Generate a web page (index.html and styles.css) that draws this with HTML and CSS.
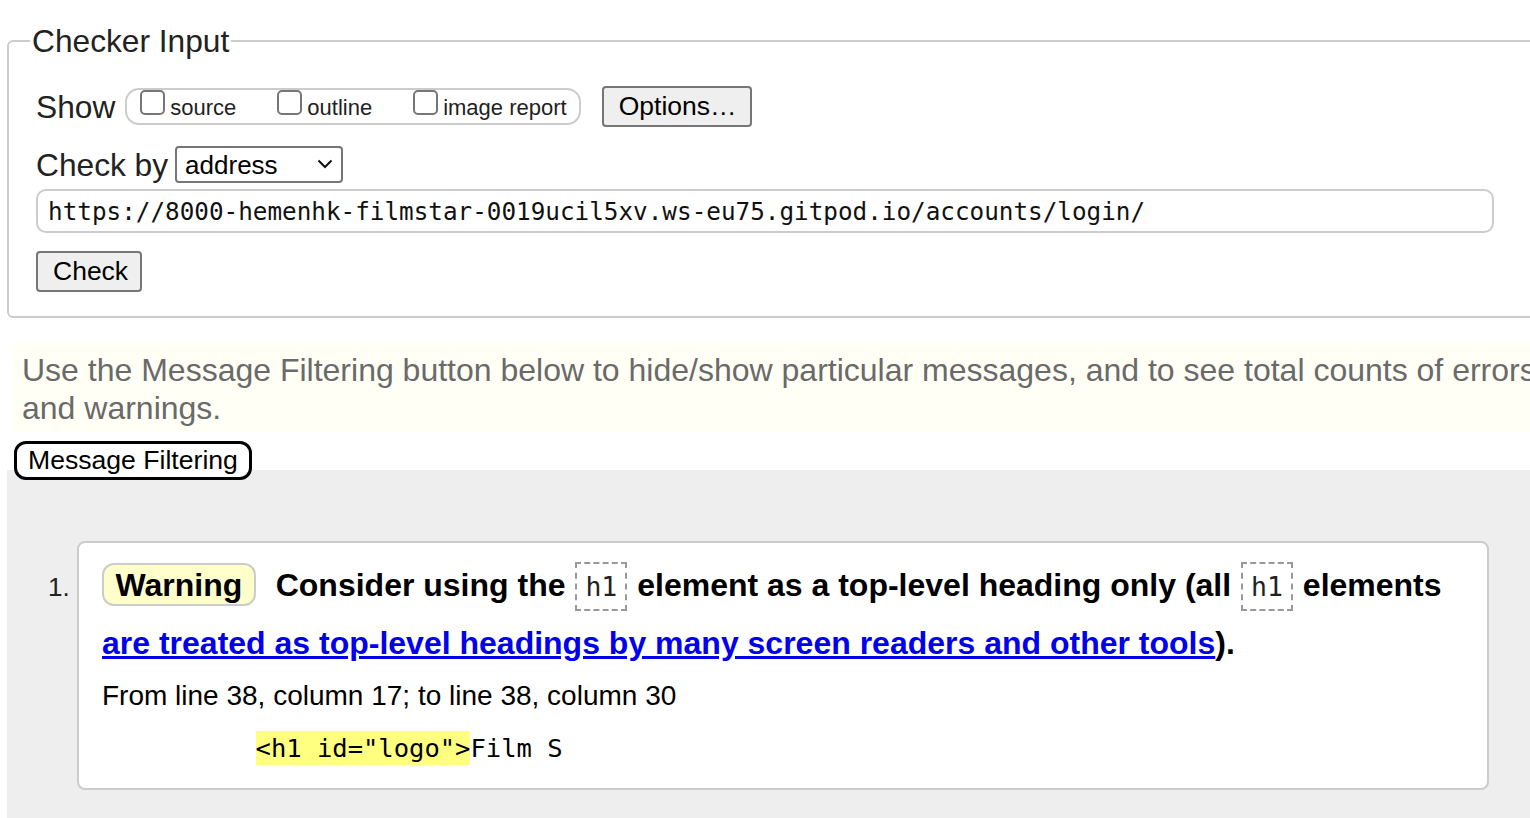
FILE: index.html
```html
<!DOCTYPE html>
<html lang="en">
<head>
<meta charset="utf-8">
<title>Nu Html Checker</title>
<link rel="stylesheet" href="styles.css">
</head>
<body>
<div class="page">
  <fieldset class="checker">
    <legend class="checker-legend">Checker Input</legend>
    <div class="row show-row">
      <span class="row-label">Show</span>
      <div class="show-group">
        <label class="opt"><input type="checkbox"><span>source</span></label>
        <label class="opt"><input type="checkbox"><span>outline</span></label>
        <label class="opt"><input type="checkbox"><span>image report</span></label>
      </div>
      <button class="btn options-btn" type="button">Options…</button>
    </div>
    <div class="row by-row">
      <span class="row-label">Check by</span>
      <span class="select-wrap">
        <select class="by-select"><option>address</option></select>
        <svg class="chev" width="16" height="10" viewBox="0 0 16 10"><path d="M1.5 1.5 L8 8 L14.5 1.5" fill="none" stroke="#111" stroke-width="2"/></svg>
      </span>
    </div>
    <input class="url" type="text" value="https://8000-hemenhk-filmstar-0019ucil5xv.ws-eu75.gitpod.io/accounts/login/">
    <div class="row check-row">
      <button class="btn check-btn" type="submit">Check</button>
    </div>
  </fieldset>

  <p class="filter-note">Use the Message Filtering button below to hide/show particular messages, and to see total counts of errors and warnings.</p>

  <div class="filter-row">
    <button class="filter-btn" type="button">Message Filtering</button>
  </div>

  <div class="results">
    <ol class="messages">
      <li class="msg">
        <p class="msg-text"><span class="badge">Warning</span> Consider using the <code class="tag">h1</code> element as a top-level heading only (all <code class="tag">h1</code> elements <a class="msg-link" href="#">are treated as top-level headings by many screen readers and other tools</a>).</p>
        <p class="location">From line 38, column 17; to line 38, column 30</p>
        <p class="extract"><code class="extract-code">          <mark class="hl">&lt;h1 id="logo"&gt;</mark>Film S</code></p>
      </li>
    </ol>
  </div>
</div>
</body>
</html>
```

FILE: styles.css
```css
html {
  overflow: hidden;
}

body {
  margin: 0;
  font-family: "Liberation Sans", Arial, sans-serif;
  color: #222;
  background: #fff;
}

.page {
  width: 1563px;
  margin-left: 7px;
}

/* ---------- Checker input fieldset ---------- */
.checker {
  margin: 23px 0 0;
  padding: 27px 0 24px 27px;
  border: 2px solid #ccc;
  border-radius: 6px;
  min-width: 0;
}

.checker-legend {
  font-size: 31.7px;
  line-height: 36px;
  padding: 0 2px;
  margin-left: -6px;
  color: #222;
}

.row {
  display: flex;
  align-items: center;
}

.row-label {
  font-size: 31.7px;
  line-height: 36px;
  color: #222;
}

.show-group {
  display: flex;
  align-items: flex-start;
  gap: 41px;
  height: 37px;
  box-sizing: border-box;
  border: 2px solid #ccc;
  border-radius: 14px;
  padding: 0 12px 0 13px;
  margin-left: 10px;
}

.opt {
  display: flex;
  align-items: flex-start;
  gap: 5px;
  font-size: 22px;
  color: #222;
}

.opt input {
  appearance: none;
  -webkit-appearance: none;
  box-sizing: border-box;
  width: 25px;
  height: 25px;
  margin: 0;
  border: 2px solid #767676;
  border-radius: 5px;
  background: #fff;
}

.opt span {
  line-height: 25px;
  padding-top: 5px;
}

.btn {
  box-sizing: border-box;
  height: 41px;
  background: #efefef;
  border: 2px solid #767676;
  border-radius: 4px;
  font-family: "Liberation Sans", Arial, sans-serif;
  font-size: 26.5px;
  color: #000;
  padding: 0 15px;
}

.options-btn {
  margin-left: 21px;
  width: 150px;
}

.by-row {
  margin-top: 19px;
}

.select-wrap {
  position: relative;
  display: inline-flex;
  margin-left: 7px;
}

.by-select {
  appearance: none;
  -webkit-appearance: none;
  box-sizing: border-box;
  width: 168px;
  height: 37px;
  padding: 0 30px 0 8px;
  font-family: "Liberation Sans", Arial, sans-serif;
  font-size: 26px;
  color: #000;
  background: #fff;
  border: 2px solid #767676;
  border-radius: 4px;
}

.chev {
  position: absolute;
  right: 10px;
  top: 13px;
  pointer-events: none;
}

.url {
  display: block;
  box-sizing: border-box;
  width: 1458px;
  height: 44px;
  margin-top: 6px;
  padding: 0 10px;
  border: 2px solid #ccc;
  border-radius: 10px;
  font-family: "DejaVu Sans Mono", "Liberation Mono", monospace;
  font-size: 24.3px;
  color: #111;
  background: #fff;
}

.check-row {
  margin-top: 18px;
}

.check-btn {
  width: 106px;
}

/* ---------- Filter note ---------- */
.filter-note {
  margin: 24px 0 0 7px;
  padding: 10px 8px 5px;
  background: #fffff6;
  color: #6a6a6a;
  font-size: 32px;
  line-height: 37.5px;
}

.filter-row {
  display: flex;
  margin: 9px 0 -10px 7px;
}

.filter-btn {
  position: relative;
  z-index: 1;
  box-sizing: border-box;
  height: 39px;
  border: 3px solid #000;
  border-radius: 12px;
  background: #fff;
  font-family: "Liberation Sans", Arial, sans-serif;
  font-size: 26.6px;
  color: #000;
  padding: 0 11px;
}

/* ---------- Results ---------- */
.results {
  background: #eee;
  padding: 71px 81px 60px 70px;
}

.messages {
  margin: 0;
  padding: 0;
  list-style: decimal outside;
}

.msg {
  background: #fff;
  border: 2px solid #ccc;
  border-radius: 8px;
  padding: 12.5px 23px 18px 23px;
}

.msg::marker {
  font-size: 26px;
  color: #222;
}

.msg-text {
  margin: 0;
  font-size: 32px;
  font-weight: bold;
  line-height: 58px;
  color: #000;
}

.badge {
  background: #ffc;
  border: 2px solid #ccc;
  border-radius: 12px;
  padding: 1.5px 11.5px;
  margin-right: 11px;
}

.tag {
  font-family: "DejaVu Sans Mono", "Liberation Mono", monospace;
  font-size: 26.5px;
  font-weight: normal;
  line-height: normal;
  color: #222;
  border: 2px dashed #999;
  padding: 7px 8px;
  margin: 0 1px;
}

.msg-link {
  color: #0000ee;
  text-decoration: underline;
}

.location {
  margin: 7px 0 0;
  font-size: 28px;
  line-height: 34px;
  color: #000;
}

.extract {
  margin: 17px 0 0;
  line-height: 36px;
}

.extract-code {
  font-family: "DejaVu Sans Mono", "Liberation Mono", monospace;
  font-size: 25.5px;
  white-space: pre;
  color: #000;
}

.hl {
  background: #ffff80;
  color: inherit;
  padding: 2px 0;
}
```
